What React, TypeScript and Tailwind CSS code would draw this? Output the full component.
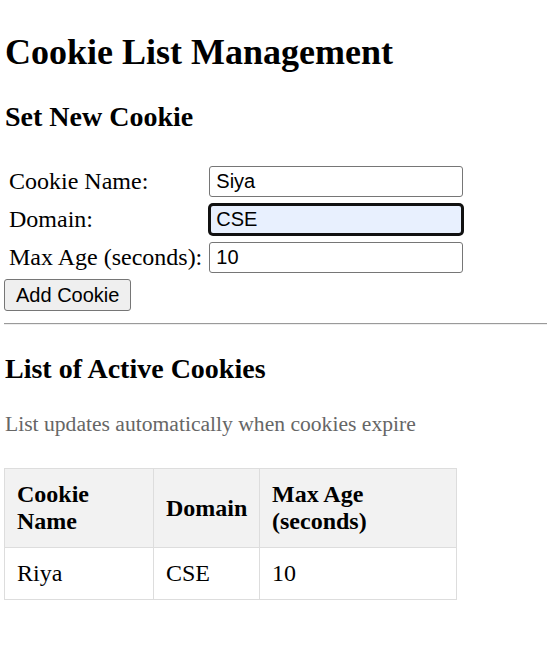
import React from "react"

const fields = [
    { label: "Cookie Name:", value: "Siya", focused: false },
    { label: "Domain:", value: "CSE", focused: true },
    { label: "Max Age (seconds):", value: "10", focused: false },
]

const cookies = [{ name: "Riya", domain: "CSE", maxAge: "10" }]

export default function App() {
    return (
        <div className="min-h-[646px] bg-white pl-[4px] text-black font-['Liberation_Serif','Times_New_Roman',serif] text-[24px] leading-[normal]">
            <h1 className="pt-[31px] mb-[28px] pl-[1px] text-[36px] font-bold">Cookie List Management</h1>
            <h2 className="mb-[28px] pl-[1px] text-[28px] font-bold">Set New Cookie</h2>

            <table className="border-separate border-spacing-[3px]">
                <tbody>
                    {fields.map((f) => (
                        <tr key={f.label}>
                            <td className="p-[2px] align-middle whitespace-nowrap">{f.label}</td>
                            <td className="p-[2px] align-middle">
                                <input
                                    defaultValue={f.value}
                                    className={
                                        f.focused
                                            ? "block w-[254px] h-[31px] px-[5px] rounded-[4px] border-[2px] border-[#111] shadow-[0_0_0_1px_#111] bg-[#e8f0fe] text-black text-[20px] font-['Liberation_Sans',Arial,sans-serif] outline-none"
                                            : "block w-[254px] h-[31px] px-[6px] rounded-[3px] border border-[#767676] bg-white text-black text-[20px] font-['Liberation_Sans',Arial,sans-serif] outline-none"
                                    }
                                />
                            </td>
                        </tr>
                    ))}
                </tbody>
            </table>
            <button className="block mt-[1px] h-[32px] px-[11px] rounded-[3px] border border-[#767676] bg-[#efefef] text-black text-[20px] leading-none font-['Liberation_Sans',Arial,sans-serif]">
                Add Cookie
            </button>

            <hr className="mt-[12px] mb-[28px] h-0 border-0 border-t border-b border-t-[#9a9a9a] border-b-[#eeeeee]" />

            <h2 className="mb-[27px] pl-[1px] text-[28px] font-bold">List of Active Cookies</h2>
            <p className="mb-[31px] pl-[1px] text-[21.6px] text-[#666]">List updates automatically when cookies expire</p>

            <table className="w-[452px] table-fixed border-collapse">
                <colgroup>
                    <col className="w-[149px]" />
                    <col className="w-[106px]" />
                    <col className="w-[197px]" />
                </colgroup>
                <thead>
                    <tr className="bg-[#f2f2f2]">
                        <th className="border border-[#dddddd] p-[12px] text-left font-bold align-middle">Cookie Name</th>
                        <th className="border border-[#dddddd] p-[12px] text-left font-bold align-middle">Domain</th>
                        <th className="border border-[#dddddd] p-[12px] text-left font-bold align-middle">Max Age (seconds)</th>
                    </tr>
                </thead>
                <tbody>
                    {cookies.map((c) => (
                        <tr key={c.name}>
                            <td className="border border-[#dddddd] p-[12px]">{c.name}</td>
                            <td className="border border-[#dddddd] p-[12px]">{c.domain}</td>
                            <td className="border border-[#dddddd] p-[12px]">{c.maxAge}</td>
                        </tr>
                    ))}
                </tbody>
            </table>
        </div>
    )
}
